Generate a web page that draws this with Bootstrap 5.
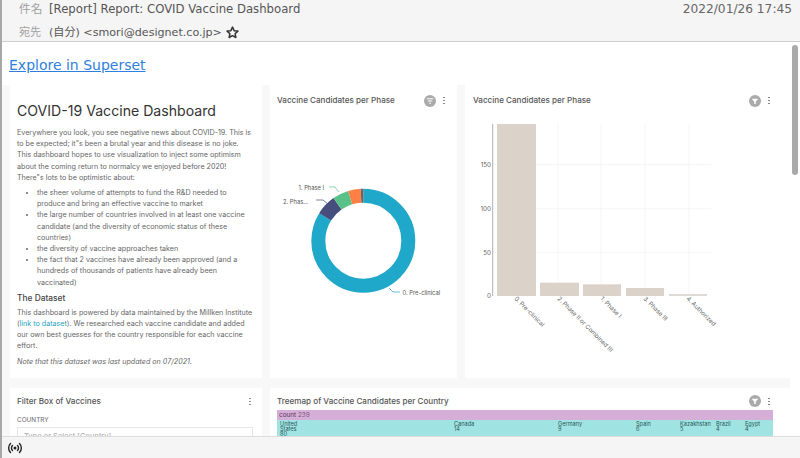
<!DOCTYPE html>
<html lang="ja">
<head>
  <meta charset="UTF-8" />
  <title>Report: COVID Vaccine Dashboard</title>
  <link href="https://cdn.jsdelivr.net/npm/bootstrap@5.3.3/dist/css/bootstrap.min.css" rel="stylesheet">
  <style>
    html,body { height:100%; overflow:hidden }
    body { background:#fff; font-family:"Inter",sans-serif; color:#484848; border-left:2px solid #a8a8a8 }
    .mail-shell { height:458px }
    .mail-head { height:42px; background:#f5f5f5; border-bottom:1px solid #cfcfcf; padding:0 8px 0 17px;
      font-family:"DejaVu Sans","Noto Sans CJK JP",sans-serif; color:#555; flex:none }
    .mail-subject { font-size:11.700px; line-height:19px; height:20px }
    .mail-to { font-size:11.100px; line-height:19px; height:22px; padding-top:3px }
    .mail-key { color:#a0a0a0; width:30px; display:inline-block }
    .mail-date { font-size:12.200px; color:#666 }
    .mail-body { flex:1; min-height:0; overflow:hidden; position:relative }
    .explore { height:43px; padding:14px 0 0 7px; font:14px/18px "DejaVu Sans",sans-serif }
    .explore a { color:#2f7fdc }
    .dash { display:grid; grid-template-columns:252px 187px 325px; grid-template-rows:293px 120px; gap:10px 8px;
      background:#f8f8f8; padding:0 0 0 8px; width:788px }
    .pane { background:#fff; border:0; border-radius:0; overflow:hidden; position:relative }
    .pane-wide { grid-column:2 / 4 }
    .pane-text { padding:16px 7px 0 7px; font-size:7.150px; line-height:11.200px; color:#666 }
    .pane-text h1 { font-size:14.100px; line-height:20px; font-weight:400; color:#333; margin:0 0 6px }
    .pane-text h2 { font-size:8.400px; line-height:12px; font-weight:500; color:#444; margin:4px 0 3px }
    .pane-text p { margin:0 0 4px }
    .pane-text ul { margin:4px 0 0; padding-left:20px }
    .pane-text a { color:#1f9fbe; text-decoration:none }
    .pane-title { font-size:8.100px; font-weight:500; color:#555; height:31px; padding:0 7px 0 7px }
    .pane-title-lg { height:26px }
    .pane-tools { gap:7px }
    .tools-near { margin-right:5px }
    .tools-far { margin-right:13px }
    .kebab { width:2px; height:9px; background:radial-gradient(circle,#888 1px,transparent 1.100px) 0 0/2px 3px }
    .field-label { font-size:6.400px; line-height:8px; color:#666; margin:2px 7px 3px }
    .field-box { margin:0 9px 0 7px; height:24px; border:1px solid #e6e6e6; padding:3px 6px; font-size:7.500px; color:#aaa }
    .tree { margin:-4px 17px 0 7px; font-size:5.600px; line-height:5px; color:#2c5a5a }
    .tree-top { background:#d6afd8; height:10px; padding:2.500px 2px; font-size:6.400px; color:#553a55 }
    .tree-row { background:#9fe3e2; height:30px; padding-top:2px }
    .tree-cell { padding-left:3px; flex:none }
    .mail-foot { height:22px; background:#f5f5f5; border-top:1px solid #dcdcdc; flex:none; padding-left:5px; z-index:2 }
    .scroll-thumb { position:absolute; top:3px; left:790px; width:6px; height:130px; background:#aaa; border-radius:3px }
    svg text { font-family:"Inter",sans-serif }
  </style>
</head>
<body>
<div class="mail-shell d-flex flex-column">
  <header class="mail-head">
    <div class="d-flex justify-content-between mail-subject">
      <div><span class="mail-key">件名</span>[Report] Report: COVID Vaccine Dashboard</div>
      <div class="mail-date">2022/01/26 17:45</div>
    </div>
    <div class="mail-to d-flex align-items-center">
      <span class="mail-key">宛先</span><span>(自分) &lt;smori@designet.co.jp&gt;</span>
      <svg width="13" height="13" viewBox="0 0 12 12" class="ms-1"><path d="M6 1l1.500 3.300 3.500.4-2.600 2.400.7 3.500L6 8.900l-3.100 1.700.7-3.500L1 4.700l3.500-.4z" fill="none" stroke="#333" stroke-width="1.400" stroke-linejoin="round"/></svg>
    </div>
  </header>

  <main class="mail-body">
    <div class="explore"><a href="#">Explore in Superset</a></div>
    <div class="dash">
      <section class="card pane pane-text">
        <h1>COVID-19 Vaccine Dashboard</h1>
        <p class="mb-0">Everywhere you look, you see negative news about COVID-19. This is<br>to be expected; it"s been a brutal year and this disease is no joke.<br>This dashboard hopes to use visualization to inject some optimism<br>about the coming return to normalcy we enjoyed before 2020!<br>There"s lots to be optimistic about:</p>
        <ul>
          <li>the sheer volume of attempts to fund the R&amp;D needed to produce and bring an effective vaccine to market</li>
          <li>the large number of countries involved in at least one vaccine candidate (and the diversity of economic status of these countries)</li>
          <li>the diversity of vaccine approaches taken</li>
          <li>the fact that 2 vaccines have already been approved (and a hundreds of thousands of patients have already been vaccinated)</li>
        </ul>
        <h2>The Dataset</h2>
        <p>This dashboard is powered by data maintained by the Millken Institute (<a href="#">link to dataset</a>). We researched each vaccine candidate and added our own best guesses for the country responsible for each vaccine effort.</p>
        <p><em>Note that this dataset was last updated on 07/2021.</em></p>
      </section>

      <section class="card pane">
        <div class="pane-title d-flex justify-content-between align-items-center">
          <span>Vaccine Candidates per Phase</span>
          <span class="d-flex align-items-center pane-tools tools-near">
            <svg width="12" height="12" viewBox="0 0 11 11"><circle cx="5.500" cy="5.500" r="5.500" fill="#aaa"/><path d="M2.500 3.500h6M3.500 5.500h4M4.700 7.500h1.600" stroke="#fff" stroke-width="1"/></svg>
            <span class="kebab"></span>
          </span>
        </div>
        <svg width="187" height="262" viewBox="270 116 187 262">
          <g fill="none" stroke-width="14" transform="rotate(-90 363.300 240.700)">
            <circle cx="363.300" cy="240.700" r="45" stroke="#1fa8c9" pathLength="360" stroke-dasharray="302 58"/>
            <circle cx="363.300" cy="240.700" r="45" stroke="#454e7c" pathLength="360" stroke-dasharray="23 337" stroke-dashoffset="-302"/>
            <circle cx="363.300" cy="240.700" r="45" stroke="#5ac189" pathLength="360" stroke-dasharray="18 342" stroke-dashoffset="-325"/>
            <circle cx="363.300" cy="240.700" r="45" stroke="#ff7f44" pathLength="360" stroke-dasharray="14 346" stroke-dashoffset="-343"/>
            <circle cx="363.300" cy="240.700" r="45" stroke="#666" pathLength="360" stroke-dasharray="3 357" stroke-dashoffset="-357"/>
          </g>
          <g fill="none" stroke-width=".7">
            <path d="M329 187h6l4 5" stroke="#5ac189"/>
            <path d="M316 200h7l5 4" stroke="#454e7c"/>
            <path d="M389 288l4 4h7" stroke="#1fa8c9"/>
          </g>
          <g font-size="5.800" fill="#555">
            <text x="298.500" y="189.500">1. Phase I</text>
            <text x="283" y="203.500">2. Phas...</text>
            <text x="402.500" y="295">0. Pre-clinical</text>
          </g>
        </svg>
      </section>

      <section class="card pane">
        <div class="pane-title d-flex justify-content-between align-items-center ps-2">
          <span>Vaccine Candidates per Phase</span>
          <span class="d-flex align-items-center pane-tools tools-far">
            <svg width="12" height="12" viewBox="0 0 11 11"><circle cx="5.500" cy="5.500" r="5.500" fill="#aaa"/><path d="M2.500 3.500h6l-2.300 2.800v2h-1.400v-2z" fill="#fff"/></svg>
            <span class="kebab"></span>
          </span>
        </div>
        <svg width="325" height="262" viewBox="465 116 325 262">
          <g stroke="#f3f3f3" stroke-width=".8">
            <path d="M493 164.700h218M493 208.700h218M493 252.300h218M558 124v172M601 124v172M645 124v172M689 124v172"/>
          </g>
          <path d="M492.700 124v172" stroke="#999" stroke-width=".8"/>
          <g fill="#dbd2c9">
            <rect x="497" y="124" width="39" height="172"/>
            <rect x="540" y="282.700" width="39" height="13.300"/>
            <rect x="583" y="284.300" width="38" height="11.700"/>
            <rect x="626" y="288" width="38" height="8"/>
            <rect x="669" y="294" width="38" height="2" fill="#dedad6"/>
          </g>
          <g font-size="6.300" fill="#666" text-anchor="end">
            <text x="491" y="167">150</text>
            <text x="491" y="211">100</text>
            <text x="491" y="255">50</text>
            <text x="491" y="298">0</text>
          </g>
          <g font-size="6.100" fill="#666">
            <text transform="translate(514 299) rotate(45)">0. Pre-clinical</text>
            <text transform="translate(557 299) rotate(45)">2. Phase II or Combined III</text>
            <text transform="translate(600 299) rotate(45)">1. Phase I</text>
            <text transform="translate(643 299) rotate(45)">3. Phase III</text>
            <text transform="translate(686 299) rotate(45)">4. Authorized</text>
          </g>
        </svg>
      </section>

      <section class="card pane">
        <div class="pane-title pane-title-lg d-flex justify-content-between align-items-center">
          <span>Filter Box of Vaccines</span>
          <span class="kebab me-1"></span>
        </div>
        <div class="field-label">COUNTRY</div>
        <div class="field-box">Type or Select [Country]</div>
      </section>

      <section class="card pane pane-wide">
        <div class="pane-title pane-title-lg d-flex justify-content-between align-items-center">
          <span>Treemap of Vaccine Candidates per Country</span>
          <span class="d-flex align-items-center pane-tools tools-far">
            <svg width="12" height="12" viewBox="0 0 11 11"><circle cx="5.500" cy="5.500" r="5.500" fill="#aaa"/><path d="M2.500 3.500h6l-2.300 2.800v2h-1.400v-2z" fill="#fff"/></svg>
            <span class="kebab"></span>
          </span>
        </div>
        <div class="tree">
          <div class="tree-top">count <span class="opacity-75">239</span></div>
          <div class="tree-row d-flex">
            <div class="tree-cell" style="width:174px">United<br>States<br>80</div>
            <div class="tree-cell" style="width:104px">Canada<br>14</div>
            <div class="tree-cell" style="width:78px">Germany<br>9</div>
            <div class="tree-cell" style="width:44px">Spain<br>6</div>
            <div class="tree-cell" style="width:36px">Kazakhstan<br>5</div>
            <div class="tree-cell" style="width:29px">Brazil<br>4</div>
            <div class="tree-cell">Egypt<br>4</div>
          </div>
        </div>
      </section>
    </div>
    <div class="scroll-thumb"></div>
  </main>

  <footer class="mail-foot d-flex align-items-center">
    <svg width="16" height="14" viewBox="0 0 16 14" fill="none" stroke="#222" stroke-width="1.400" stroke-linecap="round">
      <circle cx="8" cy="7" r="1.500" fill="#222" stroke="none"/>
      <path d="M5.500 4.500a3.500 3.500 0 0 0 0 5M10.500 4.500a3.500 3.500 0 0 1 0 5M3.500 2.500a6.400 6.400 0 0 0 0 9M12.500 2.500a6.400 6.400 0 0 1 0 9"/>
    </svg>
  </footer>
</div>
<script src="https://cdn.jsdelivr.net/npm/bootstrap@5.3.3/dist/js/bootstrap.bundle.min.js"></script>
</body>
</html>
